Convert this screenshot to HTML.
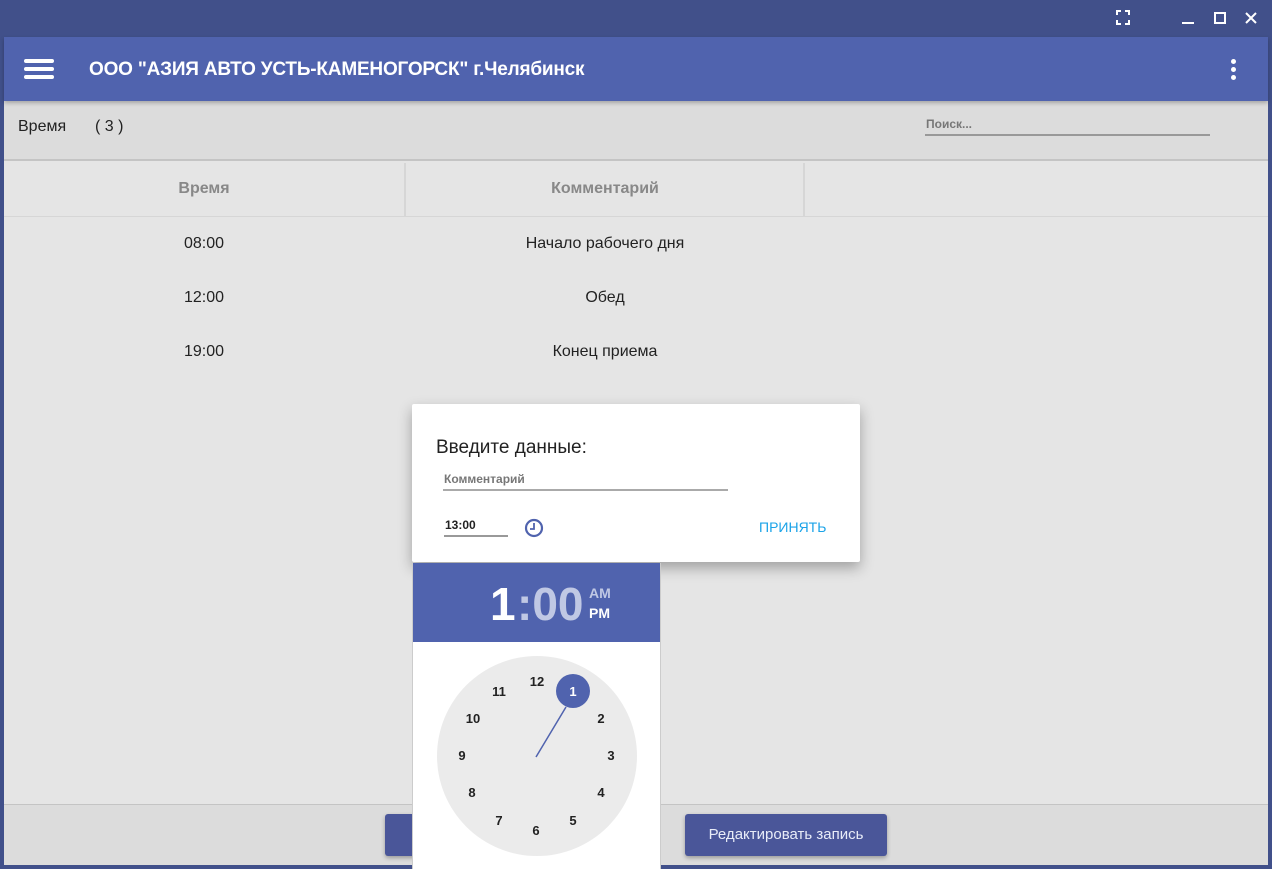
<!DOCTYPE html>
<html><head><meta charset="utf-8"><style>
*{margin:0;padding:0;box-sizing:border-box}
body{width:1272px;height:869px;background:#41508a;font-family:"Liberation Sans",sans-serif;position:relative;overflow:hidden}
.abs{position:absolute}
</style></head><body>
<!-- title bar icons -->
<svg class="abs" style="left:1110px;top:6px" width="160" height="24">
<path d="M7 9V5h4M15 5h4v4M19 14v4h-4M11 18H7v-4" stroke="#fff" stroke-width="2" fill="none"/>
<path d="M72 17h12" stroke="#fff" stroke-width="2"/>
<rect x="105" y="7" width="10" height="10" stroke="#fff" stroke-width="2" fill="none"/>
<path d="M136 7l10 10M146 7l-10 10" stroke="#fff" stroke-width="2"/>
</svg>
<!-- window -->
<div class="abs" style="left:4px;top:37px;width:1264px;height:828px;background:#e5e5e5"></div>
<div class="abs" style="left:4px;top:37px;width:1264px;height:64px;background:#5063ae;box-shadow:0 2px 4px rgba(0,0,0,.25);z-index:2"></div>
<div class="abs" style="left:24px;top:59px;width:30px;height:4px;background:#fff;border-radius:2px;z-index:3"></div>
<div class="abs" style="left:24px;top:67px;width:30px;height:4px;background:#fff;border-radius:2px;z-index:3"></div>
<div class="abs" style="left:24px;top:75px;width:30px;height:4px;background:#fff;border-radius:2px;z-index:3"></div>
<div class="abs" style="left:89px;top:59px;color:#fff;font-size:19px;font-weight:bold;z-index:3;letter-spacing:-0.2px">ООО "АЗИЯ АВТО УСТЬ-КАМЕНОГОРСК" г.Челябинск</div>
<div class="abs" style="left:1231px;top:59px;z-index:3">
<div style="width:5px;height:5px;border-radius:50%;background:#fff;margin-bottom:3px"></div>
<div style="width:5px;height:5px;border-radius:50%;background:#fff;margin-bottom:3px"></div>
<div style="width:5px;height:5px;border-radius:50%;background:#fff"></div></div>
<!-- toolbar -->
<div class="abs" style="left:4px;top:101px;width:1264px;height:60px;background:#dcdcdc;border-bottom:2px solid #c4c4c4"></div>
<div class="abs" style="left:18px;top:118px;font-size:16px;color:#222">Время</div>
<div class="abs" style="left:95px;top:118px;font-size:16px;color:#222">( 3 )</div>
<div class="abs" style="left:926px;top:117px;font-size:12px;color:#777;font-weight:bold">Поиск...</div>
<div class="abs" style="left:925px;top:134px;width:285px;height:2px;background:#999"></div>
<!-- table header -->
<div class="abs" style="left:4px;top:163px;width:1264px;height:54px;border-bottom:1px solid #d6d6d6"></div>
<div class="abs" style="left:404px;top:163px;width:2px;height:53px;background:#d6d6d6"></div>
<div class="abs" style="left:803px;top:163px;width:2px;height:53px;background:#d6d6d6"></div>
<div class="abs" style="left:4px;top:180px;width:400px;text-align:center;font-size:16px;font-weight:bold;color:#888">Время</div>
<div class="abs" style="left:405px;top:180px;width:400px;text-align:center;font-size:16px;font-weight:bold;color:#888">Комментарий</div>
<div class="abs" style="left:4px;top:235px;width:400px;text-align:center;font-size:16px;color:#222">08:00</div>
<div class="abs" style="left:405px;top:235px;width:400px;text-align:center;font-size:16px;color:#222">Начало рабочего дня</div>
<div class="abs" style="left:4px;top:289px;width:400px;text-align:center;font-size:16px;color:#222">12:00</div>
<div class="abs" style="left:405px;top:289px;width:400px;text-align:center;font-size:16px;color:#222">Обед</div>
<div class="abs" style="left:4px;top:343px;width:400px;text-align:center;font-size:16px;color:#222">19:00</div>
<div class="abs" style="left:405px;top:343px;width:400px;text-align:center;font-size:16px;color:#222">Конец приема</div>
<!-- bottom bar -->
<div class="abs" style="left:4px;top:804px;width:1264px;height:61px;background:#dcdcdc;border-top:1px solid #c4c4c4"></div>
<div class="abs" style="left:385px;top:814px;width:100px;height:42px;background:#4a5699;border-radius:3px;box-shadow:0 2px 4px rgba(0,0,0,.3)"></div>
<div class="abs" style="left:685px;top:814px;width:202px;height:42px;background:#4a5699;border-radius:3px;box-shadow:0 2px 4px rgba(0,0,0,.3);color:#e8ecf8;font-size:15px;text-align:center;line-height:42px">Редактировать запись</div>
<!-- dialog -->
<div class="abs" style="left:412px;top:404px;width:448px;height:158px;background:#fff;border-radius:2px;box-shadow:0 6px 14px rgba(0,0,0,.3);z-index:5">
<div class="abs" style="left:24px;top:33px;font-size:19px;color:#222">Введите данные:</div>
<div class="abs" style="left:32px;top:68px;font-size:12px;color:#777;font-weight:bold">Комментарий</div>
<div class="abs" style="left:31px;top:85px;width:285px;height:2px;background:#aaa"></div>
<div class="abs" style="left:33px;top:114px;font-size:12px;color:#222;font-weight:bold">13:00</div>
<div class="abs" style="left:32px;top:131px;width:64px;height:2px;background:#999"></div>
<svg class="abs" style="left:112px;top:114px" width="20" height="20"><circle cx="10" cy="10" r="8" stroke="#5063ae" stroke-width="2.2" fill="none"/><path d="M10 5v6H6" stroke="#5063ae" stroke-width="1.8" fill="none"/></svg>
<div class="abs" style="left:347px;top:115px;font-size:14px;color:#1aa3e8">ПРИНЯТЬ</div>
</div>
<!-- clock popup -->
<div class="abs" style="left:412px;top:563px;width:249px;height:306px;background:#fff;z-index:6;border-left:1px solid #ccc;border-right:1px solid #ccc">
<div style="height:79px;background:#5063ae;position:relative">
<div class="abs" style="left:77px;top:14px;font-size:46px;font-weight:bold;color:#fff">1</div>
<div class="abs" style="left:104px;top:14px;font-size:46px;font-weight:bold;color:#c0c8e4">:00</div>
<div class="abs" style="left:176px;top:22px;font-size:14px;font-weight:bold;color:#c0c8e4">AM</div>
<div class="abs" style="left:176px;top:42px;font-size:14px;font-weight:bold;color:#fff">PM</div>
</div>
</div>
<svg class="abs" style="left:412px;top:642px;z-index:7" width="249" height="227" font-family="Liberation Sans" font-weight="bold" font-size="13" fill="#222" text-anchor="middle">
<circle cx="125" cy="114" r="100" fill="#ebebeb"/>
<line x1="124" y1="115" x2="154" y2="65" stroke="#5063ae" stroke-width="1.5"/>
<circle cx="161" cy="49" r="17" fill="#5063ae"/>
<text x="161" y="54" fill="#fff">1</text>
<text x="125" y="44">12</text>
<text x="87" y="54">11</text>
<text x="61" y="81">10</text>
<text x="189" y="81">2</text>
<text x="50" y="118">9</text>
<text x="199" y="118">3</text>
<text x="60" y="155">8</text>
<text x="189" y="155">4</text>
<text x="87" y="183">7</text>
<text x="161" y="183">5</text>
<text x="124" y="193">6</text>
</svg>
</body></html>
